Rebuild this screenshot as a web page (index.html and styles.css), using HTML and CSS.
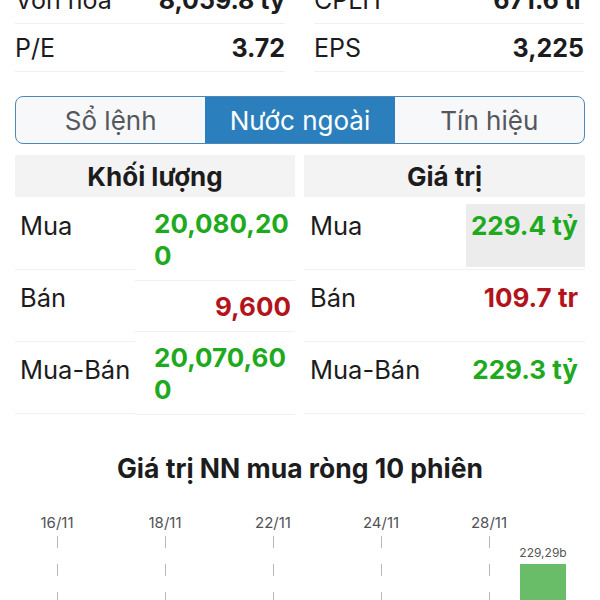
FILE: index.html
```html
<!DOCTYPE html>
<html lang="vi">
<head>
<meta charset="utf-8">
<title>Nước ngoài</title>
<link rel="stylesheet" href="styles.css">
</head>
<body>
<div class="page">
  <div class="stats">
    <div class="stat-col">
      <div class="stat"><span class="stat-label">Vốn hóa</span><span class="stat-value">8,059.8 tỷ</span></div>
      <div class="stat"><span class="stat-label">P/E</span><span class="stat-value">3.72</span></div>
    </div>
    <div class="stat-col">
      <div class="stat"><span class="stat-label">CPLH</span><span class="stat-value">671.6 tr</span></div>
      <div class="stat"><span class="stat-label">EPS</span><span class="stat-value">3,225</span></div>
    </div>
  </div>

  <div class="tabs">
    <div class="tab">Sổ lệnh</div>
    <div class="tab active">Nước ngoài</div>
    <div class="tab">Tín hiệu</div>
  </div>

  <div class="tables">
    <div class="table">
      <div class="thead">Khối lượng</div>
      <div class="split">
        <div class="labels">
          <div class="lcell">Mua</div>
          <div class="lcell">Bán</div>
          <div class="lcell">Mua-Bán</div>
        </div>
        <div class="values">
          <div class="vcell"><span class="num up">20,080,200</span></div>
          <div class="vcell"><span class="num down">9,600</span></div>
          <div class="vcell"><span class="num up">20,070,600</span></div>
        </div>
      </div>
    </div>
    <div class="table">
      <div class="thead">Giá trị</div>
      <div class="row">
        <div class="rlabel">Mua</div>
        <div class="rvalue flash up">229.4 tỷ</div>
      </div>
      <div class="row">
        <div class="rlabel">Bán</div>
        <div class="rvalue down">109.7 tr</div>
      </div>
      <div class="row">
        <div class="rlabel">Mua-Bán</div>
        <div class="rvalue up">229.3 tỷ</div>
      </div>
    </div>
  </div>

  <h2 class="chart-title">Giá trị NN mua ròng 10 phiên</h2>

  <div class="chart">
    <div class="slot"><div class="date">16/11</div><div class="guide"></div></div>
    <div class="slot"><div class="date"></div></div>
    <div class="slot"><div class="date">18/11</div><div class="guide"></div></div>
    <div class="slot"><div class="date"></div></div>
    <div class="slot"><div class="date">22/11</div><div class="guide"></div></div>
    <div class="slot"><div class="date"></div></div>
    <div class="slot"><div class="date">24/11</div><div class="guide"></div></div>
    <div class="slot"><div class="date"></div></div>
    <div class="slot"><div class="date">28/11</div><div class="guide"></div></div>
    <div class="slot"><div class="date"></div><div class="bar-label">229,29b</div><div class="bar"></div></div>
  </div>
</div>
</body>
</html>
```
FILE: styles.css
```css
* { box-sizing: border-box; }
html, body { margin: 0; padding: 0; background: #fff; overflow: hidden; }
body {
  font-family: Inter, "Liberation Sans", Arial, sans-serif;
  color: #1c1c1e;
}
.page {
  width: 600px;
  padding: 0 15px;
  margin-top: -24px;
}

/* top stats */
.stats {
  display: grid;
  grid-template-columns: 270px 270px;
  column-gap: 29px;
}
.stat {
  height: 48px;
  display: flex;
  align-items: center;
  justify-content: space-between;
  border-bottom: 1px solid #f0f0f0;
  font-size: 25px;
}
.stat-label { font-weight: 400; color: #1c1c1e; }
.stat-value { font-weight: 700; color: #1c1c1e; }

/* segmented tabs */
.tabs {
  margin-top: 24px;
  height: 48px;
  display: flex;
  border: 1.5px solid #4f86b4;
  border-radius: 8px;
  overflow: hidden;
  background: #f7f8fa;
}
.tab {
  flex: 1;
  display: flex;
  align-items: center;
  justify-content: center;
  font-size: 26px;
  color: #55575c;
}
.tab.active {
  background: #2b7fbd;
  color: #fff;
}

/* tables */
.tables {
  margin-top: 11px;
  display: grid;
  grid-template-columns: 280px 281px;
  column-gap: 9px;
}
.thead {
  height: 42px;
  background: #f3f3f3;
  display: flex;
  align-items: center;
  justify-content: center;
  font-size: 26px;
  font-weight: 700;
  color: #1c1c1e;
  margin-bottom: 1px;
}
.split { display: flex; }
.labels { width: 120px; }
.lcell {
  height: 72px;
  padding: 12px 0 0 5px;
  font-size: 25.5px;
  line-height: 32px;
  border-bottom: 1px solid #f0f0f0;
}
.values { flex: 1; }
.vcell {
  padding: 10px 4px 8px 19px;
  text-align: right;
  font-size: 26px;
  line-height: 32px;
  border-bottom: 1px solid #f0f0f0;
}
.num {
  display: inline-block;
  text-align: left;
  word-break: break-all;
  font-weight: 700;
}
.up { color: #1ea91e; }
.down { color: #b3141c; }

.row {
  height: 72px;
  display: flex;
  justify-content: space-between;
  align-items: flex-start;
  border-bottom: 1px solid #f0f0f0;
}
.rlabel {
  padding: 12px 0 0 6px;
  font-size: 25.5px;
  line-height: 32px;
}
.rvalue {
  width: 119px;
  height: 63px;
  margin-top: 6px;
  padding: 6px 7px 0 0;
  text-align: right;
  font-size: 26px;
  line-height: 32px;
  font-weight: 700;
}
.rvalue.flash { background: #ececec; }

/* chart */
.chart-title {
  margin: 38px 0 0;
  text-align: center;
  font-size: 26.5px;
  line-height: 30px;
  font-weight: 700;
  color: #1c1c1e;
}
.chart {
  margin: 32px 0 0 15px;
  display: grid;
  grid-template-columns: repeat(10, 54px);
  height: 200px;
}
.slot {
  display: flex;
  flex-direction: column;
  align-items: center;
}
.date {
  height: 16px;
  font-size: 15px;
  line-height: 16px;
  color: #505256;
}
.guide {
  margin-top: 5px;
  width: 1px;
  flex: 1;
  background: repeating-linear-gradient(to bottom, #b8b8b8 0 12px, transparent 12px 28px);
}
.bar-label {
  margin-top: 15px;
  font-size: 12px;
  line-height: 14px;
  color: #555;
}
.bar {
  margin-top: 4px;
  width: 46px;
  flex: 1;
  background: #6abd68;
}
```
